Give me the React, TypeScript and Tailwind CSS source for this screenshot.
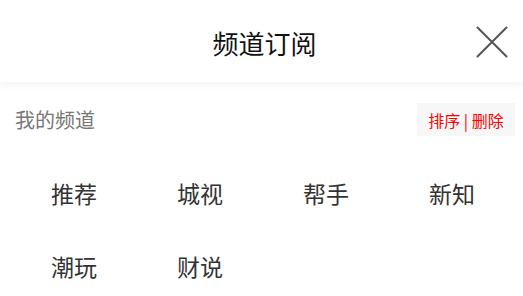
const font = { fontFamily: '"Noto Sans CJK SC", "Noto Sans", sans-serif' };

const myChannels = ["推荐", "城视", "帮手", "新知", "潮玩", "财说"];

function CloseIcon() {
  return (
    <svg width="32" height="32" viewBox="0 0 32 32" fill="none">
      <path d="M1.5 1.5 L30.5 30.5 M30.5 1.5 L1.5 30.5" stroke="#555" strokeWidth="2" strokeLinecap="round" />
    </svg>
  );
}

export default function App() {
  return (
    <div className="w-[523px] h-[296px] bg-white overflow-hidden" style={font}>
      <header className="relative z-10 h-[82px] grid grid-cols-[1fr_auto_1fr] items-center bg-white shadow-[0_3px_8px_rgba(0,0,0,0.05)]">
        <div />
        <h1 className="pl-[6px] pt-[4px] text-[26px] text-[#111] leading-none">频道订阅</h1>
        <div className="flex justify-end pr-[15px] pt-[2px]">
          <button aria-label="关闭" className="p-0">
            <CloseIcon />
          </button>
        </div>
      </header>

      <div className="mt-[21px] flex items-center justify-between pl-[15px] pr-[8px]">
        <span className="text-[20px] text-[#777] leading-none">我的频道</span>
        <button className="h-[33px] w-[98px] bg-[#f7f7f7] text-[16px] text-[#ff0000] leading-none">
          排序 | 删除
        </button>
      </div>

      <div className="mt-[21px] grid grid-cols-4 pl-[11px] pr-[8px]">
        {myChannels.map((c) => (
          <div key={c} className="h-[73px] flex items-center justify-center text-[23px] text-[#333]">
            {c}
          </div>
        ))}
      </div>
    </div>
  );
}
